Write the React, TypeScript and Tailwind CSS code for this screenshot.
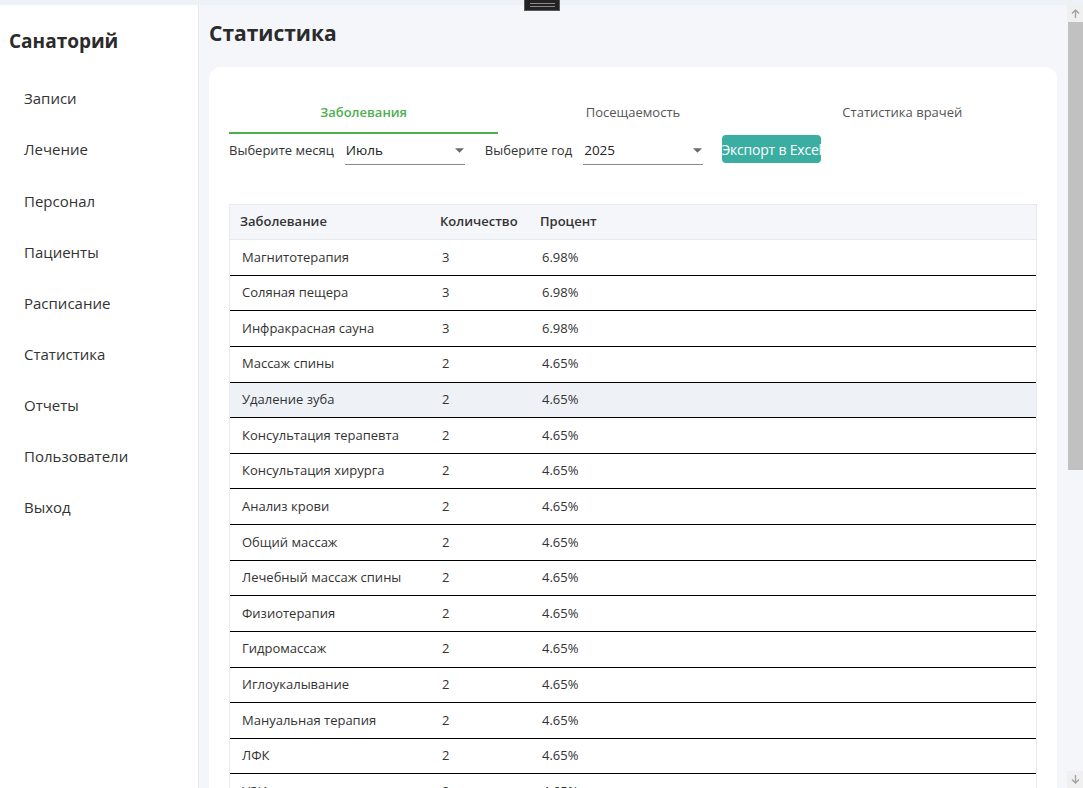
import { useState } from 'react';

const navItems = ['Записи', 'Лечение', 'Персонал', 'Пациенты', 'Расписание', 'Статистика', 'Отчеты', 'Пользователи', 'Выход'];

const rows: { name: string; count: number }[] = [
  { name: 'Магнитотерапия', count: 3 },
  { name: 'Соляная пещера', count: 3 },
  { name: 'Инфракрасная сауна', count: 3 },
  { name: 'Массаж спины', count: 2 },
  { name: 'Удаление зуба', count: 2 },
  { name: 'Консультация терапевта', count: 2 },
  { name: 'Консультация хирурга', count: 2 },
  { name: 'Анализ крови', count: 2 },
  { name: 'Общий массаж', count: 2 },
  { name: 'Лечебный массаж спины', count: 2 },
  { name: 'Физиотерапия', count: 2 },
  { name: 'Гидромассаж', count: 2 },
  { name: 'Иглоукалывание', count: 2 },
  { name: 'Мануальная терапия', count: 2 },
  { name: 'ЛФК', count: 2 },
  { name: 'УЗИ', count: 2 },
  { name: 'ЭКГ', count: 2 },
  { name: 'Грязелечение', count: 2 },
  { name: 'Ингаляции', count: 2 },
  { name: 'Консультация невролога', count: 2 },
];

const total = rows.reduce((s, r) => s + r.count, 0);

function Caret() {
  return (
    <svg width="9" height="5" viewBox="0 0 10 5" className="shrink-0">
      <path d="M0 0h10L5 5z" fill="#6b6b6b" />
    </svg>
  );
}

function ScrollArrow({ down }: { down?: boolean }) {
  return (
    <div className="h-[17px] flex items-center justify-center bg-[#f0f0f0]">
      <svg width="9" height="9" viewBox="0 0 9 9" className={down ? 'rotate-180' : ''}>
        <path d="M4.5 1v8M1 4.5l3.5-3.5 3.5 3.5" stroke="#a3a3a3" strokeWidth="1.4" fill="none" />
      </svg>
    </div>
  );
}

export default function App() {
  const [tab, setTab] = useState(0);
  const tabs = ['Заболевания', 'Посещаемость', 'Статистика врачей'];

  return (
    <div className="h-screen flex flex-col bg-[#eef2f8] text-[#333]" style={{ fontFamily: '"Open Sans", "Noto Sans", sans-serif' }}>
      <div className="absolute left-[524px] top-0 w-[36px] h-[11px] bg-[#232323] border border-[#5a5a5a] border-t-0 flex flex-col items-center justify-center gap-[2px] z-10">
        <div className="w-[25px] h-[1px] bg-[#8a8a8a]" />
        <div className="w-[25px] h-[1px] bg-[#8a8a8a]" />
      </div>
      <div className="h-[5px] shrink-0" />
      <div className="flex flex-1 min-h-0">
        <aside className="w-[199px] shrink-0 bg-white border-r border-[#e6e8ec]">
          <div className="px-[9px] pt-[23px] text-[19px] font-bold text-[#2b2b2b] leading-[26px]">Санаторий</div>
          <nav className="pt-[19px] pl-[24px]">
            {navItems.map(item => (
              <div key={item} className="h-[51.15px] flex items-center text-[15px] text-[#333] cursor-pointer">{item}</div>
            ))}
          </nav>
        </aside>
        <main className="flex-1 min-w-0 bg-[#f5f6fa] overflow-hidden">
          <div className="px-[10px]">
            <h1 className="text-[21px] font-bold text-[#2b2b2b] pt-[14px] leading-[28px]">Статистика</h1>
            <div className="mt-[20px] bg-white rounded-[12px] px-[20px] pt-[30px] pb-[360px]">
              <div className="grid grid-cols-3">
                {tabs.map((t, i) => (
                  <button key={t} onClick={() => setTab(i)}
                    className={`h-[37px] pb-[4px] text-[13px] border-b-2 ${tab === i ? 'text-[#4caf50] border-[#4caf50] font-semibold' : 'text-[#555] border-transparent font-medium'}`}>
                    {t}
                  </button>
                ))}
              </div>
              <div className="flex items-center h-[30px] mt-[2px] text-[13px]">
                <span className="text-[#333]">Выберите месяц</span>
                <div className="ml-[11px] w-[120px] h-[28px] border-b border-[#8a8a8a] flex items-center justify-between pl-[1px] pr-[1px] text-[13.5px] text-[#222]">
                  <span>Июль</span><Caret />
                </div>
                <span className="ml-[20px] text-[#333]">Выберите год</span>
                <div className="ml-[11px] w-[120px] h-[28px] border-b border-[#8a8a8a] flex items-center justify-between pl-[1px] pr-[1px] text-[13.5px] text-[#222]">
                  <span>2025</span><Caret />
                </div>
                <button className="ml-[19px] mb-[4px] w-[99px] h-[28px] rounded-[4px] bg-[#3aaea0] text-white text-[14px] whitespace-nowrap overflow-hidden flex items-center justify-center tracking-[-0.2px]">
                  Экспорт в Excel
                </button>
              </div>
              <div className="mt-[38px] border border-[#e6e9ee] text-[13px]">
                <div className="flex items-center h-[35px] bg-[#f5f6fa] border-b border-[#e6e9ee] font-semibold text-[#333]">
                  <div className="w-[200px] pl-[10px]">Заболевание</div>
                  <div className="w-[100px] pl-[10px]">Количество</div>
                  <div className="pl-[10px]">Процент</div>
                </div>
                {rows.map(r => (
                  <div key={r.name} className={`flex items-center h-[35.64px] border-b border-black text-[#333] ${r.name === 'Удаление зуба' ? 'bg-[#eef2f6]' : ''}`}>
                    <div className="w-[200px] pl-[12px]">{r.name}</div>
                    <div className="w-[100px] pl-[12px]">{r.count}</div>
                    <div className="pl-[12px]">{((r.count / total) * 100).toFixed(2)}%</div>
                  </div>
                ))}
              </div>
            </div>
          </div>
        </main>
        <div className="w-[16px] shrink-0 flex flex-col bg-[#f5f6fa]">
          <ScrollArrow />
          <div className="flex-1 pl-[1px]">
            <div className="h-[448px] bg-[#c1c1c1]" />
          </div>
          <ScrollArrow down />
        </div>
      </div>
    </div>
  );
}
